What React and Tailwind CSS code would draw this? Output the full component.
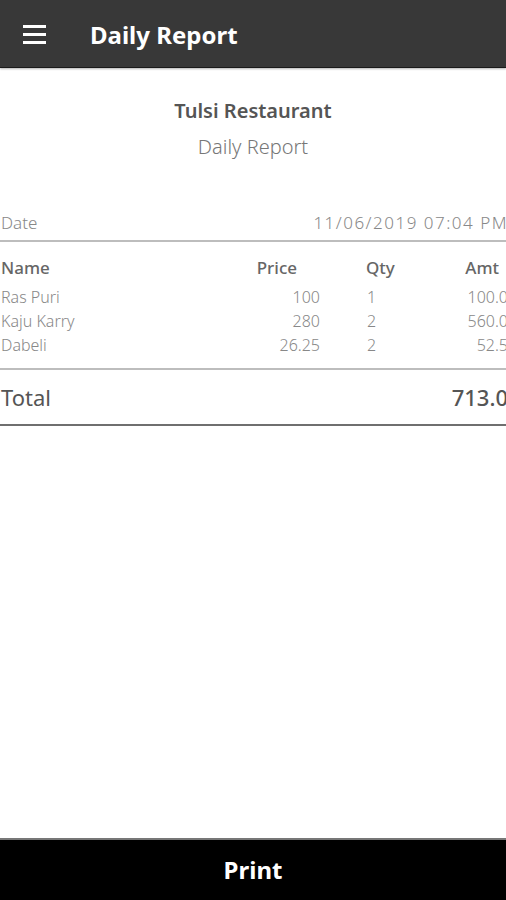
const items = [
  { name: 'Ras Puri', price: '100', qty: '1', amt: '100.0' },
  { name: 'Kaju Karry', price: '280', qty: '2', amt: '560.0' },
  { name: 'Dabeli', price: '26.25', qty: '2', amt: '52.5' },
]

const App = () => {
  return (
    <div className="h-[900px] w-[506px] flex flex-col bg-white overflow-hidden font-['Noto_Sans',sans-serif]">
      {/* Toolbar */}
      <header className="h-[68px] shrink-0 flex items-center bg-[#383838] border-b border-[#1a1a1a] shadow-[0_1px_2px_rgba(0,0,0,0.3)]">
        <div className="w-[90px] pl-[23px] pt-[2px] flex flex-col gap-[5px]">
          <span className="block h-[3px] w-[23px] bg-white"></span>
          <span className="block h-[3px] w-[23px] bg-white"></span>
          <span className="block h-[3px] w-[23px] bg-white"></span>
        </div>
        <h1 className="text-[24px] font-bold text-white leading-none pt-[3px]">Daily Report</h1>
      </header>

      {/* Report */}
      <main className="flex-1 overflow-hidden">
        <div className="w-[508px]">
          <div className="w-[506px] text-center pt-[29px]">
            <h2 className="text-[20px] font-semibold text-[#555] leading-[28px]">Tulsi Restaurant</h2>
            <p className="text-[20px] font-light text-[#777] leading-[28px] mt-[8px]">Daily Report</p>
          </div>

          <div className="mt-[50px] flex justify-between items-end pl-[1px] text-[17px] font-light text-[#888] leading-[24px]">
            <span>Date</span>
            <span className="tracking-[1.5px]">11/06/2019 07:04 PM</span>
          </div>
          <div className="mt-[5px] h-[2px] bg-[#bdbdbd]"></div>

          <div className="grid grid-cols-[240px_80px_46px_80px_1fr] mt-[14px] text-[17px] font-medium text-[#666] leading-[24px]">
            <span className="pl-[1px]">Name</span>
            <span className="text-right pr-[23px]">Price</span>
            <span></span>
            <span>Qty</span>
            <span className="text-right pr-[9px]">Amt</span>
          </div>

          <div className="mt-[5px]">
            {items.map((item) => (
              <div
                key={item.name}
                className="grid grid-cols-[240px_80px_46px_80px_1fr] text-[16px] font-light text-[#888] leading-[24px]"
              >
                <span className="pl-[1px]">{item.name}</span>
                <span className="text-right">{item.price}</span>
                <span></span>
                <span className="pl-[1px]">{item.qty}</span>
                <span className="text-right">{item.amt}</span>
              </div>
            ))}
          </div>
          <div className="mt-[11px] h-[2px] bg-[#bdbdbd]"></div>

          <div className="mt-[12px] flex justify-between text-[22px] text-[#555] leading-[30px]">
            <span className="pl-[1px]">Total</span>
            <span className="font-medium">713.0</span>
          </div>
          <div className="mt-[12px] h-[2px] bg-[#6f6f6f]"></div>
        </div>
      </main>

      {/* Print */}
      <button className="h-[62px] shrink-0 w-full bg-black border-t-2 border-[#777] text-white text-[24px] font-bold">
        Print
      </button>
    </div>
  )
}

export default App
